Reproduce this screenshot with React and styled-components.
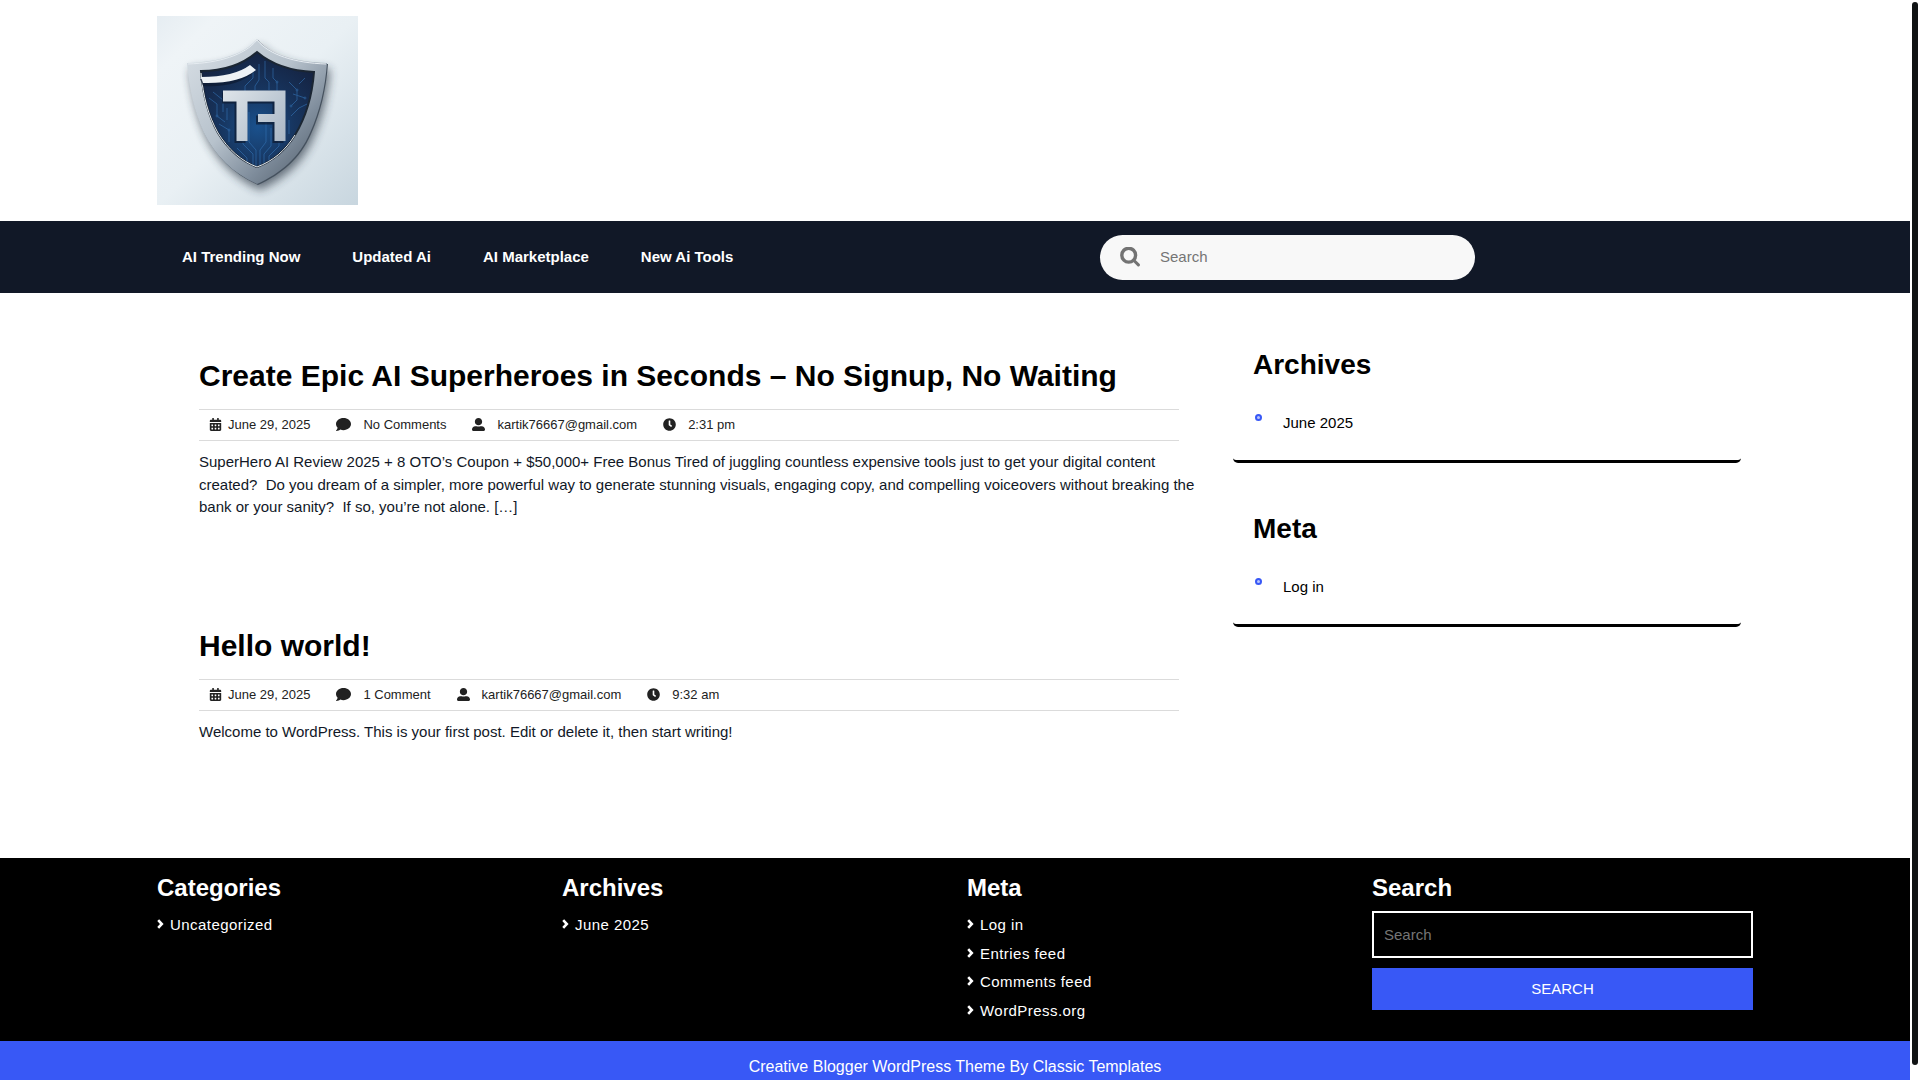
import React from "react";
import styled, { createGlobalStyle } from "styled-components";
import { FaCalendarAlt, FaComment, FaUserAlt, FaClock } from "react-icons/fa";

// --- Global ---
const GlobalStyle = createGlobalStyle`
  *, *::before, *::after {
    box-sizing: border-box;
  }

  body {
    margin: 0;
    background: #fff;
    color: #111827;
    font-family: "Liberation Sans", Arial, sans-serif;
    font-size: 15px;
    line-height: 1.5;
  }

  h2, h3, p, ul {
    margin: 0;
    padding: 0;
  }

  ul {
    list-style: none;
  }

  a {
    color: inherit;
    text-decoration: none;
  }

  input, button {
    font: inherit;
  }

  ::-webkit-scrollbar {
    display: none;
  }
`;

// --- Page frame ---
const Frame = styled.div`
  display: grid;
  grid-template-columns: minmax(0, 1fr) 10px;
`;

const ScrollTrack = styled.div`
  position: sticky;
  top: 0;
  height: 100vh;
  padding: 2px 2px 15px;
  background: #fff;
`;

const ScrollThumb = styled.div`
  height: 100%;
  border-radius: 3px;
  background: #101314;
`;

const Container = styled.div`
  max-width: 1596px;
  margin: 0 auto;
`;

// --- Header ---
const Header = styled.header`
  padding: 16px 0;
`;

const LogoLink = styled.a`
  display: block;
  width: 201px;

  svg {
    display: block;
  }
`;

const NavBar = styled.div`
  background: #111827;
`;

const NavInner = styled(Container)`
  display: grid;
  grid-template-columns: 943fr 653fr;
  align-items: center;
  min-height: 72px;
`;

const Menu = styled.nav`
  display: flex;
  gap: 52px;
  padding-left: 25px;
  color: #fff;
  font-weight: bold;
`;

const NavSearch = styled.form`
  display: flex;
  align-items: center;
  gap: 20px;
  width: 375px;
  height: 45px;
  padding: 0 20px;
  border-radius: 23px;
  background: #f8f8f8;

  label {
    display: flex;
  }

  input {
    flex: 1;
    min-width: 0;
    padding: 0;
    border: 0;
    outline: 0;
    background: transparent;
    color: #111827;
  }

  input::placeholder {
    color: #757575;
  }
`;

// --- Content ---
const Content = styled(Container)`
  display: grid;
  grid-template-columns: 980fr 508fr;
  gap: 54px;
  padding: 45px 12px 26px 42px;
`;

const Post = styled.article`
  margin-bottom: 69px;
  padding: 20px 0;
`;

const PostTitle = styled.h2`
  margin-bottom: 15px;
  color: #000;
  font-size: 30px;
  line-height: 36px;
`;

const Meta = styled.div`
  display: flex;
  align-items: center;
  gap: 26px;
  height: 32px;
  margin-bottom: 10px;
  padding: 0 10px;
  border-top: 1px solid #dbdbdb;
  border-bottom: 1px solid #dbdbdb;
  color: #222;
  font-size: 13px;
`;

const MetaItem = styled.span`
  display: flex;
  align-items: center;
  gap: ${({ $gap }) => $gap || 12}px;

  svg {
    margin-bottom: 1px;
  }
`;

// the text may run a little way into the column gap
const Excerpt = styled.p`
  margin-right: -20px;
`;

// --- Sidebar ---
const Widget = styled.section`
  margin-bottom: 39px;
  padding: 10px 20px 26px;
  border-bottom: 3px solid #000;
  border-radius: 5px;
  color: #000;
`;

const WidgetTitle = styled.h3`
  margin-bottom: 29px;
  font-size: 28px;
  line-height: 34px;
`;

const WidgetItem = styled.li`
  display: flex;
  gap: 21px;
  padding-left: 2px;
  line-height: 23px;

  &::before {
    content: "";
    width: 7px;
    height: 7px;
    margin-top: 3px;
    border: 2px solid #3858f6;
    border-radius: 50%;
    background: #b9c5fc;
  }
`;

// --- Footer ---
const Footer = styled.footer`
  background: #000;
  color: #fff;
`;

const FooterGrid = styled(Container)`
  display: grid;
  grid-template-columns: repeat(4, 1fr);
  gap: 24px;
  padding: 15px 0 13px;
`;

const FooterTitle = styled.h3`
  margin-bottom: 9px;
  font-size: 24px;
  line-height: 29px;
`;

const FooterList = styled.ul`
  padding-top: 3px;
  letter-spacing: 0.03em;
`;

const FooterItem = styled.li`
  display: flex;
  gap: 6px;
  margin-bottom: 6px;

  svg {
    margin-top: 5px;
  }
`;

const FooterForm = styled.form`
  display: grid;
  gap: 10px;

  input {
    width: 100%;
    height: 47px;
    padding: 0 10px;
    border: 2px solid #fff;
    border-radius: 0;
    background: transparent;
    color: #fff;
  }

  input::placeholder {
    color: #757575;
  }

  button {
    height: 42px;
    border: 0;
    background: #3858f6;
    color: #fff;
    text-transform: uppercase;
  }
`;

const Copyright = styled.div`
  padding: 14px 0;
  background: #3858f6;
  color: #fff;
  font-size: 16px;
  line-height: 24px;
  text-align: center;
`;

const menu = ["AI Trending Now", "Updated Ai", "AI Marketplace", "New Ai Tools"];

const posts = [
  {
    title: "Create Epic AI Superheroes in Seconds – No Signup, No Waiting",
    date: "June 29, 2025",
    comments: "No Comments",
    author: "kartik76667@gmail.com",
    time: "2:31 pm",
    excerpt:
      "SuperHero AI Review 2025 + 8 OTO’s Coupon + $50,000+ Free Bonus Tired of juggling countless expensive tools just to get your digital content created?\u00a0 Do you dream of a simpler, more powerful way to generate stunning visuals, engaging copy, and compelling voiceovers without breaking the bank or your sanity?\u00a0 If so, you’re not alone. […]",
  },
  {
    title: "Hello world!",
    date: "June 29, 2025",
    comments: "1 Comment",
    author: "kartik76667@gmail.com",
    time: "9:32 am",
    excerpt:
      "Welcome to WordPress. This is your first post. Edit or delete it, then start writing!",
  },
];

const widgets = [
  { title: "Archives", links: ["June 2025"] },
  { title: "Meta", links: ["Log in"] },
];

const footerLists = [
  { title: "Categories", links: ["Uncategorized"] },
  { title: "Archives", links: ["June 2025"] },
  {
    title: "Meta",
    links: ["Log in", "Entries feed", "Comments feed", "WordPress.org"],
  },
];

const shieldOuter =
  "M100 23C112 38 138 46 170 47C168 72 163 95 153 117C142 142 124 157 100 168C76 157 59 141 47 117C37 95 32 72 30 47C62 46 88 38 100 23Z";
const shieldInner =
  "M100 36C114 48 134 55 157 56C155 82 149 101 138 119C128 135 116 145 100 151C84 145 71 133 61 117C51 99 46 80 44 55C66 55 86 48 100 36Z";

function ShieldLogo() {
  return (
    <svg width="201" height="189" viewBox="0 0 201 189" role="img" aria-label="Site logo">
      <defs>
        <linearGradient id="wall" x1="0" y1="0" x2="1" y2="1">
          <stop offset="0" stopColor="#e6edf2" />
          <stop offset="0.15" stopColor="#eff4f7" />
          <stop offset="0.5" stopColor="#e9f0f4" />
          <stop offset="1" stopColor="#c8d6df" />
        </linearGradient>
        <linearGradient id="rim" x1="0" y1="0" x2="1" y2="1">
          <stop offset="0" stopColor="#d9e0e6" />
          <stop offset="0.45" stopColor="#b7c2cc" />
          <stop offset="0.7" stopColor="#7f8d9c" />
          <stop offset="1" stopColor="#46525f" />
        </linearGradient>
        <radialGradient id="core" cx="0.5" cy="0.65" r="0.65">
          <stop offset="0" stopColor="#1a518d" />
          <stop offset="0.5" stopColor="#17355f" />
          <stop offset="1" stopColor="#152443" />
        </radialGradient>
        <linearGradient id="steel" gradientUnits="userSpaceOnUse" x1="65" y1="75" x2="129" y2="125">
          <stop offset="0" stopColor="#dfe5ea" />
          <stop offset="1" stopColor="#a9b7c6" />
        </linearGradient>
        <filter id="soft" x="-20%" y="-20%" width="140%" height="140%">
          <feGaussianBlur stdDeviation="5" />
        </filter>
        <clipPath id="inside">
          <path d={shieldInner} />
        </clipPath>
      </defs>
      <rect width="201" height="189" fill="url(#wall)" />
      <path d={shieldOuter} fill="#27323f" opacity="0.65" filter="url(#soft)" transform="translate(3 6)" />
      <path d={shieldOuter} fill="#45515e" transform="translate(1 1)" />
      <path d={shieldOuter} fill="url(#rim)" />
      <path d="M100 24C112 39 138 47 169 48M31 48C62 47 88 39 100 24" fill="none" stroke="#e6ecf1" strokeWidth="1" />
      <path d={shieldInner} fill="url(#core)" stroke="#1b2633" strokeWidth="2" />

      {/* circuit traces */}
      <g clipPath="url(#inside)" fill="none" stroke="#3474b6" strokeWidth="1" opacity="0.6">
        <path d="M96 150V138L86 128V112M99 150V134L92 126V96M103 150V134L109 126V104M107 150V138L114 130V112M90 150V142L80 132M112 148V140L122 130V118" />
        <path d="M108 45V62L112 66V74M102 48V64L98 70V74M116 52V62L120 66V76M96 54V62L88 70V75" />
        <path d="M52 82L60 88V100L68 106M56 76L66 84V96M62 108L72 114V126M70 92V104" />
        <path d="M132 66L140 74V84L134 90M148 62L142 68M134 100L142 92L150 88M136 78L148 82M132 118V104" />
        <circle cx="140" cy="74" r="1" />
        <circle cx="134" cy="90" r="1" />
        <circle cx="148" cy="82" r="1" />
        <circle cx="120" cy="66" r="1" />
        <circle cx="60" cy="100" r="1" />
        <circle cx="72" cy="114" r="1" />
      </g>
      <path d="M44 57C46 80 51 99 61 117C71 133 84 145 100 151C116 145 128 135 138 119" fill="none" stroke="#e6ecf1" strokeWidth="1" />

      {/* emblem with its shadow */}
      <g fill="none" stroke="#0d1a30" strokeWidth="11" opacity="0.7" transform="translate(-2 2)">
        <path d="M67 80H123V125M85 80V125" />
        <path d="M101 102H123" strokeWidth="9" />
      </g>
      <g fill="none" stroke="url(#steel)">
        <path d="M66 80H123V125" strokeWidth="11" />
        <path d="M85 84V125" strokeWidth="11" />
        <path d="M101 102H122" strokeWidth="8" />
      </g>
      <path d="M43 63Q76 64 93 51L97 56Q80 72 46 70Z" fill="#0d1a30" opacity="0.7" />
      <path d="M44 61Q77 61 93 49L99 54Q82 68 46 67Z" fill="#eef2f5" />
    </svg>
  );
}

function SearchIcon() {
  return (
    <svg width="20" height="20" viewBox="0 0 20 20" fill="none" stroke="#737373" aria-hidden="true">
      <circle cx="8.7" cy="8.2" r="6.9" strokeWidth="3.4" />
      <path d="M13.7 13.2L18.4 17.9" strokeWidth="3" strokeLinecap="round" />
    </svg>
  );
}

function ChevronIcon() {
  return (
    <svg width="7" height="10" viewBox="0 0 7 10" fill="none" stroke="#fff" strokeWidth="2.6" aria-hidden="true">
      <path d="M1.2 1.2L4.8 5L1.2 8.8" />
    </svg>
  );
}

function App() {
  return (
    <>
      <GlobalStyle />
      <Frame>
        <div>
          <Header>
            <Container>
              <LogoLink href="#">
                <ShieldLogo />
              </LogoLink>
            </Container>
          </Header>

          <NavBar>
            <NavInner>
              <Menu>
                {menu.map((item) => (
                  <a href="#" key={item}>
                    {item}
                  </a>
                ))}
              </Menu>
              <NavSearch role="search">
                <label htmlFor="nav-search" aria-label="Search">
                  <SearchIcon />
                </label>
                <input id="nav-search" type="search" placeholder="Search" />
              </NavSearch>
            </NavInner>
          </NavBar>

          <Content>
            <main>
              {posts.map((post) => (
                <Post key={post.title}>
                  <PostTitle>
                    <a href="#">{post.title}</a>
                  </PostTitle>
                  <Meta>
                    <MetaItem $gap={6}>
                      <FaCalendarAlt size={13} />
                      {post.date}
                    </MetaItem>
                    <MetaItem>
                      <FaComment size={15} />
                      {post.comments}
                    </MetaItem>
                    <MetaItem>
                      <FaUserAlt size={13} />
                      {post.author}
                    </MetaItem>
                    <MetaItem>
                      <FaClock size={13} />
                      {post.time}
                    </MetaItem>
                  </Meta>
                  <Excerpt>{post.excerpt}</Excerpt>
                </Post>
              ))}
            </main>

            <aside>
              {widgets.map((widget) => (
                <Widget key={widget.title}>
                  <WidgetTitle>{widget.title}</WidgetTitle>
                  <ul>
                    {widget.links.map((link) => (
                      <WidgetItem key={link}>
                        <a href="#">{link}</a>
                      </WidgetItem>
                    ))}
                  </ul>
                </Widget>
              ))}
            </aside>
          </Content>

          <Footer>
            <FooterGrid>
              {footerLists.map((list) => (
                <div key={list.title}>
                  <FooterTitle>{list.title}</FooterTitle>
                  <FooterList>
                    {list.links.map((link) => (
                      <FooterItem key={link}>
                        <ChevronIcon />
                        <a href="#">{link}</a>
                      </FooterItem>
                    ))}
                  </FooterList>
                </div>
              ))}
              <div>
                <FooterTitle>Search</FooterTitle>
                <FooterForm role="search">
                  <input type="search" placeholder="Search" aria-label="Search" />
                  <button type="button">Search</button>
                </FooterForm>
              </div>
            </FooterGrid>
            <Copyright>
              <a href="#">Creative Blogger WordPress Theme By Classic Templates</a>
            </Copyright>
          </Footer>
        </div>
        <ScrollTrack>
          <ScrollThumb />
        </ScrollTrack>
      </Frame>
    </>
  );
}

export default App;
